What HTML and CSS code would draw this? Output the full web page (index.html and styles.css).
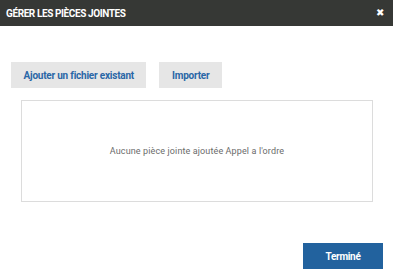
FILE: index.html
```html
<!DOCTYPE html>
<html lang="fr">
<head>
<meta charset="utf-8">
<title>Gérer les pièces jointes</title>
<link rel="stylesheet" href="styles.css">
</head>
<body>
<div class="dialog">
  <header class="header">
    <span class="title">GÉRER LES PIÈCES JOINTES</span>
    <span class="close">✖</span>
  </header>
  <div class="content">
    <div class="actions">
      <button class="btn">Ajouter un fichier existant</button>
      <button class="btn">Importer</button>
    </div>
    <div class="empty">Aucune pièce jointe ajoutée Appel a l'ordre</div>
  </div>
  <div class="footer">
    <button class="btn-primary">Terminé</button>
  </div>
</div>
</body>
</html>
```
FILE: styles.css
```css
html, body {
  margin: 0;
  padding: 0;
  background: #ffffff;
}
body {
  font-family: Roboto, "Liberation Sans", sans-serif;
  width: 393px;
  height: 279px;
  overflow: hidden;
}
.dialog {
  display: flex;
  flex-direction: column;
  height: 279px;
}
.header {
  height: 26px;
  background: #363835;
  display: flex;
  align-items: center;
  justify-content: space-between;
  padding: 0 9px 0 6px;
  flex: none;
}
.title {
  color: #ffffff;
  font-weight: 700;
  font-size: 10px;
  letter-spacing: -0.4px;
}
.close {
  color: #ffffff;
  font-size: 10px;
  line-height: 1;
}
.content {
  padding: 36px 0 0 11px;
}
.actions {
  display: flex;
  gap: 13px;
}
.btn {
  height: 26px;
  border: none;
  background: #e6e6e6;
  color: #2a67a6;
  font-family: Roboto, "Liberation Sans", sans-serif;
  font-weight: 700;
  font-size: 10px;
  letter-spacing: -0.22px;
  padding: 0 12.5px;
}
.empty {
  margin: 12px 0 0 10px;
  width: 350px;
  height: 99px;
  box-sizing: content-box;
  border: 1px solid #dcdcdc;
  display: flex;
  align-items: center;
  justify-content: center;
  color: #6b6b6b;
  font-size: 9px;
  letter-spacing: 0.12px;
  padding-bottom: 1px;
}
.footer {
  margin-top: auto;
  display: flex;
  justify-content: flex-end;
  padding: 0 10px 10px 0;
}
.btn-primary {
  width: 80px;
  height: 26px;
  border: none;
  background: #22629e;
  color: #ffffff;
  font-family: Roboto, "Liberation Sans", sans-serif;
  font-weight: 700;
  font-size: 10px;
  letter-spacing: -0.3px;
}
```
